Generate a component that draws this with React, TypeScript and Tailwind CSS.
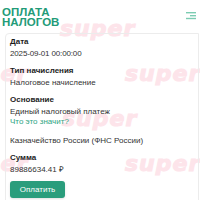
const marks = [
  { top: 'top-[18px]', left: 'left-[60px]' },
  { top: 'top-[63px]', left: 'left-[125px]' },
  { top: 'top-[63px]', left: 'left-[-47px]' },
  { top: 'top-[108px]', left: 'left-[62px]' },
  { top: 'top-[153px]', left: 'left-[125px]' },
  { top: 'top-[153px]', left: 'left-[-47px]' },
]

function Field({ label, children, className = '' }: { label: string; children: React.ReactNode; className?: string }) {
  return (
    <div className={className}>
      <div className="font-bold text-[#1d1d1d]">{label}</div>
      <div className="mt-[2px] text-[#333333]">{children}</div>
    </div>
  )
}

export default function App() {
  return (
    <div className="relative w-[200px] h-[200px] overflow-hidden bg-white font-['Liberation_Sans',Arial,sans-serif]">
      {/* watermark */}
      <div className="absolute inset-0 z-0 pointer-events-none select-none">
        {marks.map((m, i) => (
          <span
            key={i}
            className={`absolute ${m.top} ${m.left} font-['DejaVu_Sans',sans-serif] text-[22px] leading-none font-bold italic tracking-[1px] text-[#fde4ea] [-webkit-text-stroke:1px_#fde4ea]`}
          >
            super
          </span>
        ))}
      </div>

      <div className="relative z-10">
        <header className="h-[33px] flex items-center justify-between pl-[2px] pr-[4px]">
          <h1 className="text-[11.5px] leading-[10px] font-bold uppercase text-[#239b78]">
            Оплата
            <br />
            налогов
          </h1>
          <svg width="10" height="8" viewBox="0 0 10 8" className="mb-px">
            <rect x="0" y="0" width="10" height="1.4" fill="#7cccb2" />
            <rect x="4" y="3" width="6" height="1.4" fill="#7cccb2" />
            <rect x="0" y="5.8" width="10" height="1.4" fill="#7cccb2" />
          </svg>
        </header>

        <div className="ml-[5px] mr-px border border-[#ececec] rounded-tl-[4px] pl-[4px] pt-[3px] pb-4 text-[8px] leading-[10px]">
          <Field label="Дата">
            <span className="tracking-[-0.15px]">2025-09-01 00:00:00</span>
          </Field>
          <Field label="Тип начисления" className="mt-[7px]">
            Налоговое начисление
          </Field>
          <Field label="Основание" className="mt-[7px]">
            Единый налоговый платеж
            <br />
            <a className="text-[#2fa583]">Что это значит?</a>
          </Field>
          <div className="mt-[8.5px] text-[#333333]">Казначейство России (ФНС России)</div>
          <Field label="Сумма" className="mt-[7px]">
            89886634.41 ₽
          </Field>
          <button className="mt-[6.5px] w-[55px] h-[17px] rounded-[3px] bg-[#2a9d7c] text-white text-[8px] leading-[10px] shadow-sm">
            Оплатить
          </button>
        </div>
      </div>
    </div>
  )
}
